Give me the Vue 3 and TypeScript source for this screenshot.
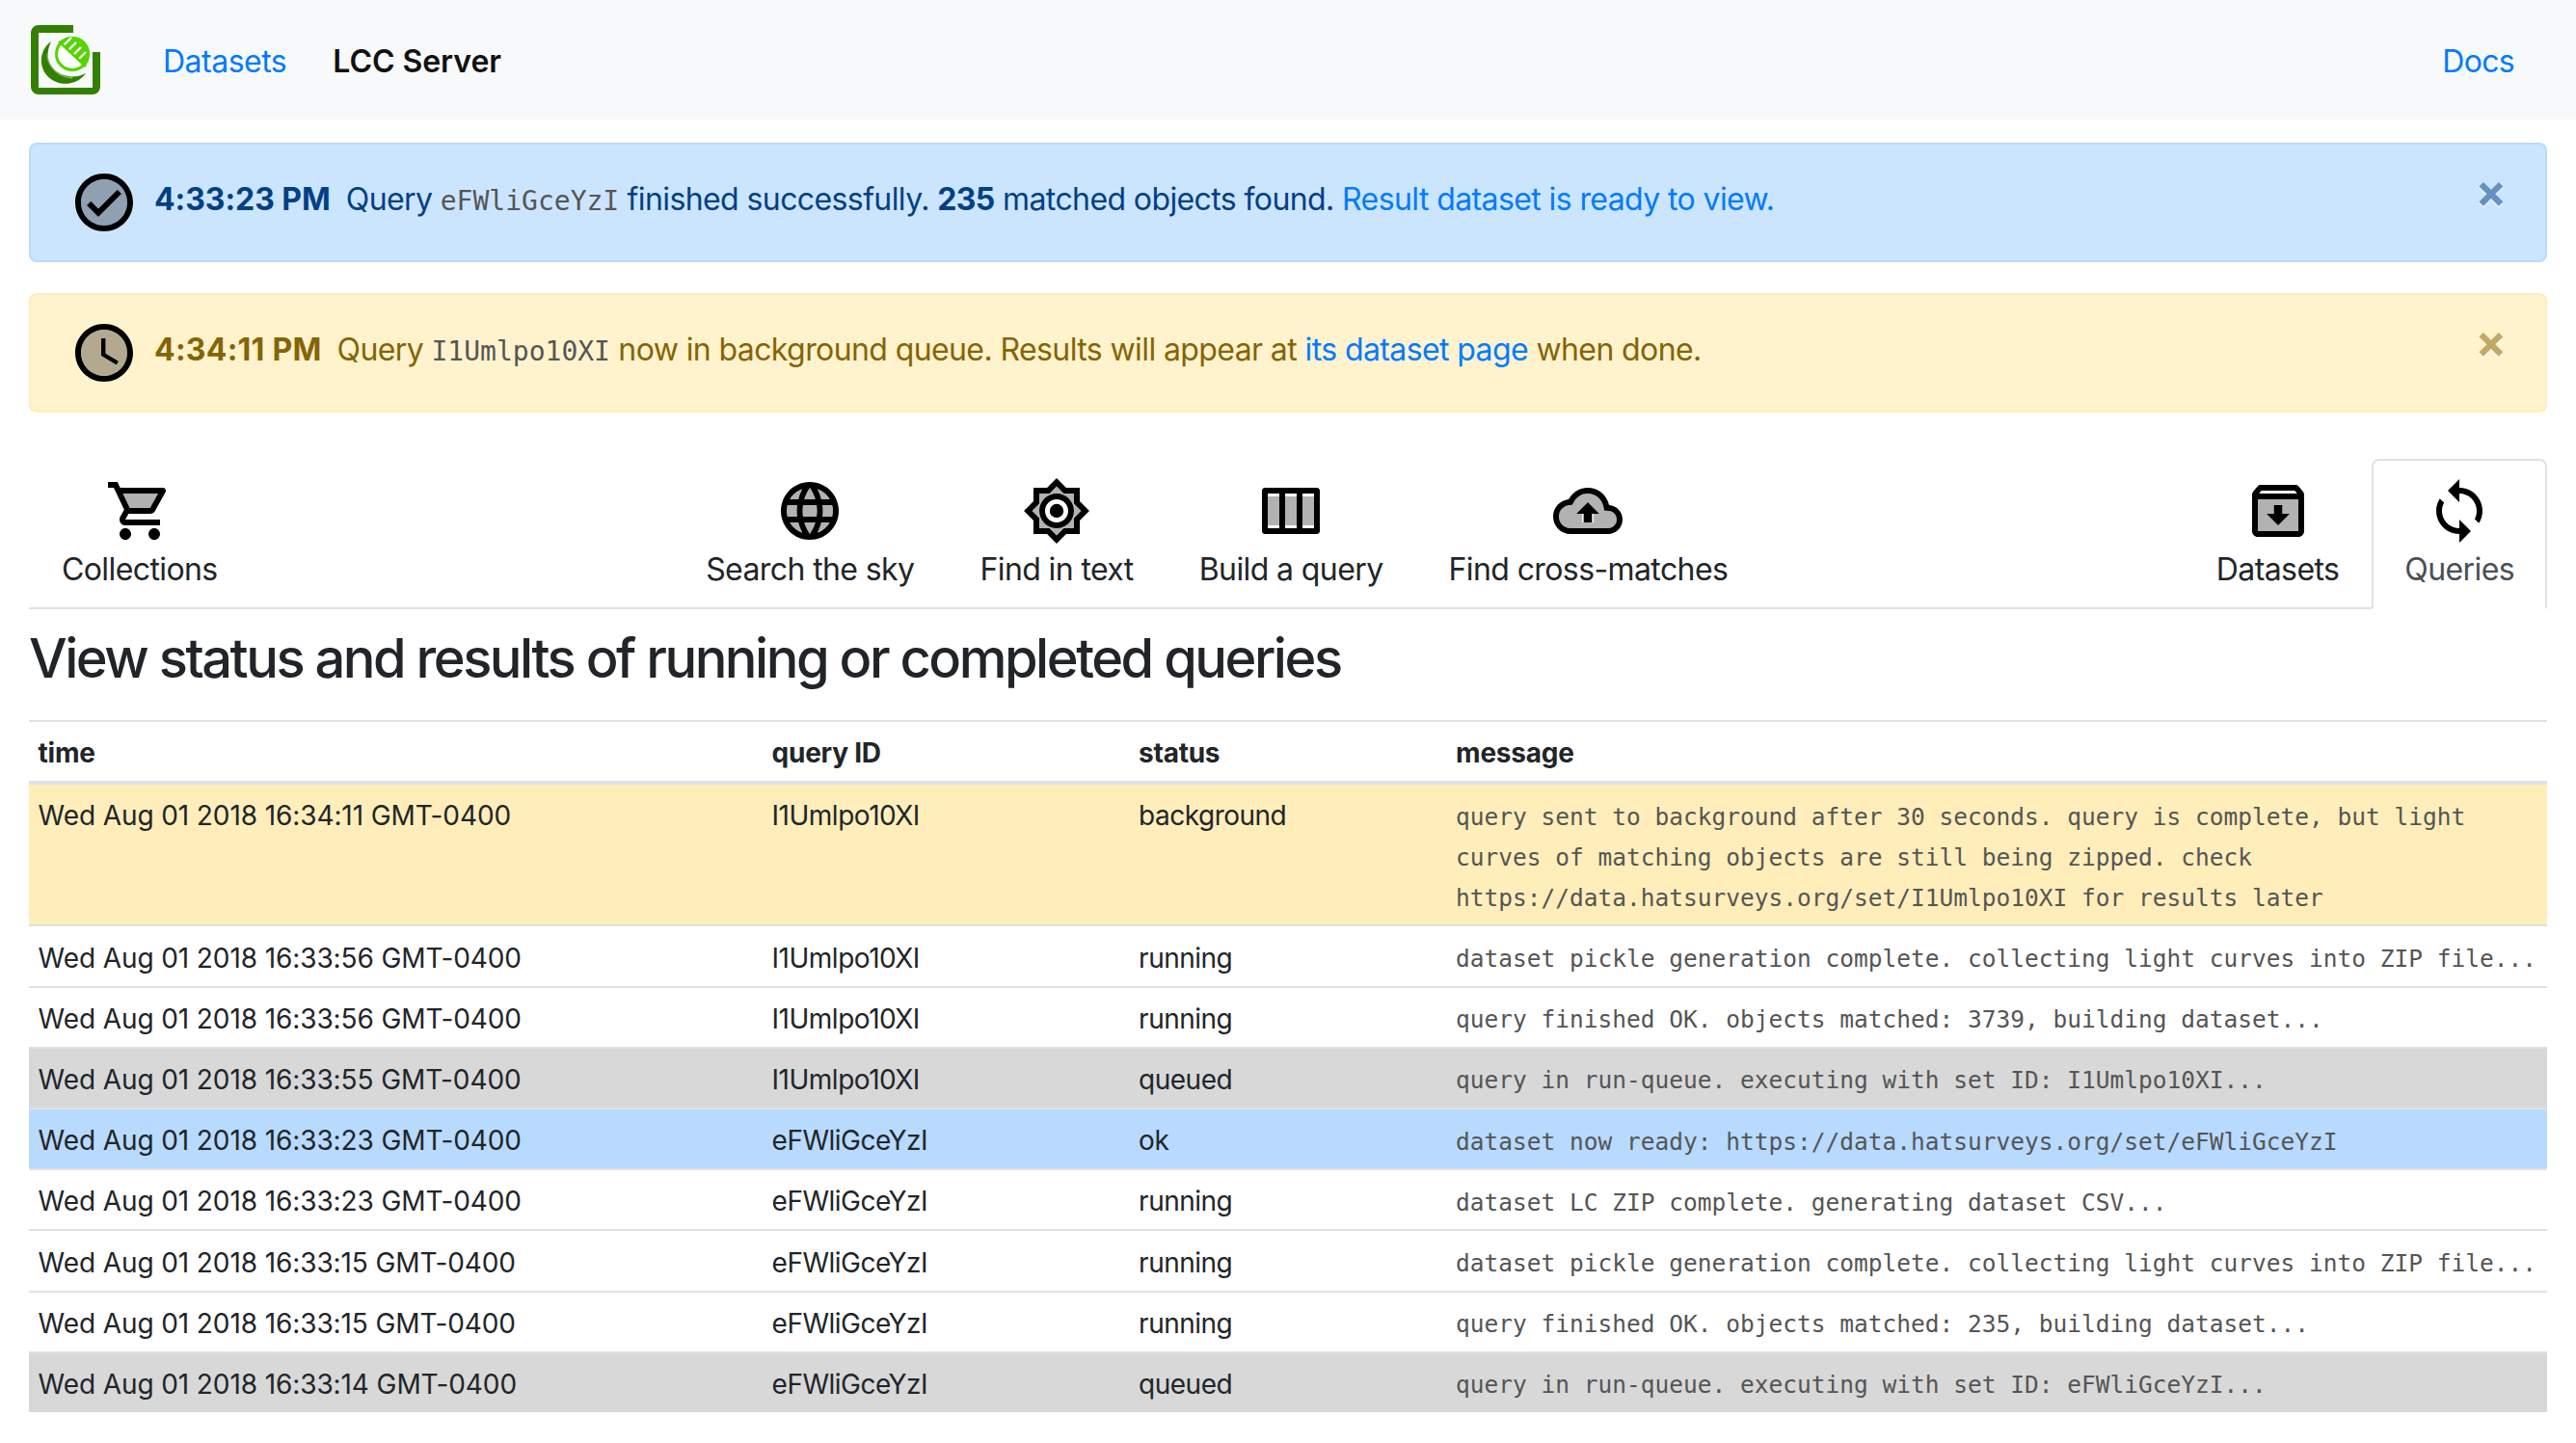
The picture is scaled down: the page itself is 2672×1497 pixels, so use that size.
<script setup lang="ts">
interface Row {
  time: string
  id: string
  status: string
  message: string
  kind: string
}

const rows: Row[] = [
  { time: 'Wed Aug 01 2018 16:34:11 GMT-0400', id: 'I1Umlpo10XI', status: 'background', kind: 'warn', message: 'query sent to background after 30 seconds. query is complete, but light curves of matching objects are still being zipped. check https://data.hatsurveys.org/set/I1Umlpo10XI for results later' },
  { time: 'Wed Aug 01 2018 16:33:56 GMT-0400', id: 'I1Umlpo10XI', status: 'running', kind: '', message: 'dataset pickle generation complete. collecting light curves into ZIP file...' },
  { time: 'Wed Aug 01 2018 16:33:56 GMT-0400', id: 'I1Umlpo10XI', status: 'running', kind: '', message: 'query finished OK. objects matched: 3739, building dataset...' },
  { time: 'Wed Aug 01 2018 16:33:55 GMT-0400', id: 'I1Umlpo10XI', status: 'queued', kind: 'gray', message: 'query in run-queue. executing with set ID: I1Umlpo10XI...' },
  { time: 'Wed Aug 01 2018 16:33:23 GMT-0400', id: 'eFWliGceYzI', status: 'ok', kind: 'info', message: 'dataset now ready: https://data.hatsurveys.org/set/eFWliGceYzI' },
  { time: 'Wed Aug 01 2018 16:33:23 GMT-0400', id: 'eFWliGceYzI', status: 'running', kind: '', message: 'dataset LC ZIP complete. generating dataset CSV...' },
  { time: 'Wed Aug 01 2018 16:33:15 GMT-0400', id: 'eFWliGceYzI', status: 'running', kind: '', message: 'dataset pickle generation complete. collecting light curves into ZIP file...' },
  { time: 'Wed Aug 01 2018 16:33:15 GMT-0400', id: 'eFWliGceYzI', status: 'running', kind: '', message: 'query finished OK. objects matched: 235, building dataset...' },
  { time: 'Wed Aug 01 2018 16:33:14 GMT-0400', id: 'eFWliGceYzI', status: 'queued', kind: 'gray', message: 'query in run-queue. executing with set ID: eFWliGceYzI...' },
]
</script>

<template>
  <div class="page">
    <nav class="navbar">
      <svg class="logo" viewBox="0 0 72 72">
        <defs>
          <clipPath id="hatch"><path d="M29.6 17.6 L56 42.4 A 17.5 17.5 0 0 0 29.6 17.6 Z" /></clipPath>
        </defs>
        <path fill="#338000" d="M44 0H8a8 8 0 0 0-8 8v56a8 8 0 0 0 8 8h56a8 8 0 0 0 8-8V28h-8v37H8V8h36z" />
        <path fill="#338000" d="M21 17C8 26 6 48 24 58c12 6 26 2 33-8-11 6-23 4-32-3-9-9-9-19-4-30z" />
        <path fill="none" stroke="#9cc77f" stroke-width="1" d="M17 30c0 12 10 24 26 25" />
        <circle cx="43" cy="30" r="16.5" fill="#fff" stroke="#55d400" stroke-width="3" />
        <g clip-path="url(#hatch)">
          <rect x="24" y="10" width="40" height="40" fill="#55d400" />
          <path stroke="#fff" stroke-width="2.4" d="M31 24 42 13M36 29 47 18M41 34 52 23M46 39 57 28" />
        </g>
        <path stroke="#55d400" stroke-width="2.6" d="M29 17 57 43" />
      </svg>
      <a class="brand-link">Datasets</a>
      <span class="brand">LCC Server</span>
      <a class="docs">Docs</a>
    </nav>

    <div class="alert alert-info">
      <svg class="alert-icon" viewBox="0 0 24 24">
        <path opacity=".3" d="M12 4c-4.41 0-8 3.59-8 8s3.59 8 8 8 8-3.59 8-8-3.59-8-8-8zm-2 13l-4-4 1.41-1.41L10 14.17l6.59-6.59L18 9l-8 8z" />
        <path d="M12 2C6.48 2 2 6.48 2 12s4.48 10 10 10 10-4.48 10-10S17.52 2 12 2zm0 18c-4.41 0-8-3.59-8-8s3.59-8 8-8 8 3.59 8 8-3.59 8-8 8zm4.59-12.42L10 14.17l-2.59-2.58L6 13l4 4 8-8z" />
      </svg>
      <p class="alert-text"><strong class="stamp">4:33:23 PM</strong>Query <code>eFWliGceYzI</code> finished successfully. <strong>235</strong> matched objects found. <a>Result dataset is ready to view.</a></p>
      <span class="close">×</span>
    </div>

    <div class="alert alert-warn">
      <svg class="alert-icon" viewBox="0 0 24 24">
        <path opacity=".3" d="M12 4c-4.42 0-8 3.58-8 8s3.58 8 8 8 8-3.58 8-8-3.58-8-8-8zm4.25 12.15L11 13V7h1.5v5.25l4.5 2.67-.75 1.23z" />
        <path d="M11.99 2C6.47 2 2 6.48 2 12s4.47 10 9.99 10C17.52 22 22 17.52 22 12S17.52 2 11.99 2zM12 20c-4.42 0-8-3.58-8-8s3.58-8 8-8 8 3.58 8 8-3.58 8-8 8zm.5-13H11v6l5.25 3.15.75-1.23-4.5-2.67z" />
      </svg>
      <p class="alert-text"><strong class="stamp stamp-wide">4:34:11 PM</strong>Query <code>I1Umlpo10XI</code> now in background queue. Results will appear at <a>its dataset page</a> when done.</p>
      <span class="close">×</span>
    </div>

    <div class="tabs">
      <div class="tab-group">
        <div class="tab">
          <svg class="tab-icon" viewBox="0 0 24 24">
            <path opacity=".3" d="M15.55 11l2.76-5H6.16l2.37 5z" />
            <path d="M15.55 13c.75 0 1.41-.41 1.75-1.03l3.58-6.49c.37-.66-.11-1.48-.87-1.48H5.21l-.94-2H1v2h2l3.6 7.59-1.35 2.44C4.52 15.37 5.48 17 7 17h12v-2H7l1.1-2h7.45zM6.16 6h12.15l-2.76 5H8.53L6.16 6zM7 18c-1.1 0-1.99.9-1.99 2S5.9 22 7 22s2-.9 2-2-.9-2-2-2zm10 0c-1.1 0-1.99.9-1.99 2s.89 2 1.99 2 2-.9 2-2-.9-2-2-2z" />
          </svg>
          <span class="tab-label">Collections</span>
        </div>
      </div>
      <div class="tab-group">
        <div class="tab">
          <svg class="tab-icon" viewBox="0 0 24 24">
            <path opacity=".3" d="M5.08 8h2.95c.32-1.25.78-2.45 1.38-3.56-1.84.63-3.37 1.9-4.33 3.56zm2.42 4c0-.68.06-1.34.14-2H4.26c-.16.64-.26 1.31-.26 2s.1 1.36.26 2h3.38c-.08-.66-.14-1.32-.14-2zm-2.42 4c.96 1.66 2.49 2.93 4.33 3.56-.6-1.11-1.06-2.31-1.38-3.56H5.08zM12 4.04c-.83 1.2-1.48 2.53-1.91 3.96h3.82c-.43-1.43-1.08-2.76-1.91-3.96zM18.92 8c-.96-1.65-2.49-2.93-4.33-3.56.6 1.11 1.06 2.31 1.38 3.56h2.95zM12 19.96c.83-1.2 1.48-2.53 1.91-3.96h-3.82c.43 1.43 1.08 2.76 1.91 3.96zm2.59-.4c1.84-.63 3.37-1.91 4.33-3.56h-2.95c-.32 1.25-.78 2.45-1.38 3.56zM19.74 10h-3.38c.08.66.14 1.32.14 2s-.06 1.34-.14 2h3.38c.16-.64.26-1.31.26-2s-.1-1.36-.26-2zM9.66 10c-.09.65-.16 1.32-.16 2s.07 1.34.16 2h4.68c.09-.66.16-1.32.16-2s-.07-1.35-.16-2H9.66z" />
            <path d="M11.99 2C6.47 2 2 6.48 2 12s4.47 10 9.99 10C17.52 22 22 17.52 22 12S17.52 2 11.99 2zm6.93 6h-2.95c-.32-1.25-.78-2.45-1.38-3.56 1.84.63 3.37 1.91 4.33 3.56zM12 4.04c.83 1.2 1.48 2.53 1.91 3.96h-3.82c.43-1.43 1.08-2.76 1.91-3.96zM4.26 14C4.1 13.36 4 12.69 4 12s.1-1.36.26-2h3.38c-.08.66-.14 1.32-.14 2s.06 1.34.14 2H4.26zm.82 2h2.95c.32 1.25.78 2.45 1.38 3.56-1.84-.63-3.37-1.9-4.33-3.56zm2.95-8H5.08c.96-1.66 2.49-2.93 4.33-3.56C8.81 5.55 8.35 6.75 8.03 8zM12 19.96c-.83-1.2-1.48-2.53-1.91-3.96h3.82c-.43 1.43-1.08 2.76-1.91 3.96zM14.34 14H9.66c-.09-.66-.16-1.32-.16-2s.07-1.35.16-2h4.68c.09.65.16 1.32.16 2s-.07 1.34-.16 2zm.25 5.56c.6-1.11 1.06-2.31 1.38-3.56h2.95c-.96 1.65-2.49 2.93-4.33 3.56zM16.36 14c.08-.66.14-1.32.14-2s-.06-1.34-.14-2h3.38c.16.64.26 1.31.26 2s-.1 1.36-.26 2h-3.38z" />
          </svg>
          <span class="tab-label">Search the sky</span>
        </div>
        <div class="tab">
          <svg class="tab-icon" viewBox="0 0 24 24">
            <path opacity=".3" d="M18 9.52V6h-3.52L12 3.52 9.52 6H6v3.52L3.52 12 6 14.48V18h3.52L12 20.48 14.48 18H18v-3.52L20.48 12 18 9.52zM12 18c-3.31 0-6-2.69-6-6s2.69-6 6-6 6 2.69 6 6-2.69 6-6 6z" />
            <path d="M20 8.69V4h-4.69L12 .69 8.69 4H4v4.69L.69 12 4 15.31V20h4.69L12 23.31 15.31 20H20v-4.69L23.31 12 20 8.69zm-2 5.79V18h-3.52L12 20.48 9.52 18H6v-3.52L3.52 12 6 9.52V6h3.52L12 3.52 14.48 6H18v3.52L20.48 12 18 14.48zM12 6c-3.31 0-6 2.69-6 6s2.69 6 6 6 6-2.69 6-6-2.69-6-6-6zm0 10c-2.21 0-4-1.79-4-4s1.79-4 4-4 4 1.79 4 4-1.79 4-4 4z" />
            <circle cx="12" cy="12" r="2.4" />
          </svg>
          <span class="tab-label">Find in text</span>
        </div>
        <div class="tab">
          <svg class="tab-icon" viewBox="0 0 24 24">
            <path opacity=".3" d="M4 7h4v10H4zM10 7h4v10h-4zM16 7h4v10h-4z" />
            <path d="M21 4H3c-.55 0-1 .45-1 1v14c0 .55.45 1 1 1h18c.55 0 1-.45 1-1V5c0-.55-.45-1-1-1zM8 18H4V6h4v12zm6 0h-4V6h4v12zm6 0h-4V6h4v12z" />
          </svg>
          <span class="tab-label">Build a query</span>
        </div>
        <div class="tab">
          <svg class="tab-icon" viewBox="0 0 24 24">
            <path opacity=".3" d="M19.21 12.04l-1.53-.11-.3-1.5C16.88 7.86 14.62 6 12 6 9.94 6 8.08 7.14 7.12 8.96l-.5.95-1.07.11C3.53 10.24 2 11.95 2 14c0 2.21 1.79 4 4 4h13c1.65 0 3-1.35 3-3 0-1.55-1.22-2.86-2.79-2.96zM14 13v3h-4v-3H8l4-4 4 4h-2z" />
            <path d="M19.35 10.04C18.67 6.59 15.64 4 12 4 9.11 4 6.6 5.64 5.35 8.04 2.34 8.36 0 10.91 0 14c0 3.31 2.69 6 6 6h13c2.76 0 5-2.24 5-5 0-2.64-2.05-4.78-4.65-4.96zM19 18H6c-2.21 0-4-1.79-4-4 0-2.05 1.53-3.76 3.56-3.97l1.07-.11.5-.95C8.08 7.14 9.94 6 12 6c2.62 0 4.88 1.86 5.39 4.43l.3 1.5 1.53.11c1.56.1 2.78 1.41 2.78 2.96 0 1.65-1.35 3-3 3z" />
            <path d="M8 13h2.55v3h2.9v-3H16l-4-4z" />
          </svg>
          <span class="tab-label">Find cross-matches</span>
        </div>
      </div>
      <div class="tab-group">
        <div class="tab">
          <svg class="tab-icon" viewBox="0 0 24 24">
            <path opacity=".3" d="M5 8v11h14V8H5zm7 9l-4-4h2.55v-3h2.9v3H16l-4 4z" />
            <path d="M20.54 5.23l-1.39-1.68C18.88 3.21 18.47 3 18 3H6c-.47 0-.88.21-1.16.55L3.46 5.23C3.17 5.57 3 6.02 3 6.5V19c0 1.1.9 2 2 2h14c1.1 0 2-.9 2-2V6.5c0-.48-.17-.93-.46-1.27zM6.24 5h11.52l.83 1H5.42l.82-1zM5 19V8h14v11H5zm8.45-9h-2.9v3H8l4 4 4-4h-2.55z" />
          </svg>
          <span class="tab-label">Datasets</span>
        </div>
        <div class="tab tab-active">
          <svg class="tab-icon" viewBox="0 0 24 24">
            <path d="M12 4V1L8 5l4 4V6c3.31 0 6 2.69 6 6 0 1.01-.25 1.97-.7 2.8l1.46 1.46C19.54 15.03 20 13.57 20 12c0-4.42-3.58-8-8-8zm0 14c-3.31 0-6-2.69-6-6 0-1.01.25-1.97.7-2.8L5.24 7.74C4.46 8.97 4 10.43 4 12c0 4.42 3.58 8 8 8v3l4-4-4-4v3z" />
          </svg>
          <span class="tab-label">Queries</span>
        </div>
      </div>
    </div>

    <h1 class="title">View status and results of running or completed queries</h1>

    <table class="table">
      <colgroup>
        <col class="col-time" />
        <col class="col-id" />
        <col class="col-status" />
        <col />
      </colgroup>
      <thead>
        <tr>
          <th>time</th>
          <th>query ID</th>
          <th>status</th>
          <th>message</th>
        </tr>
      </thead>
      <tbody>
        <tr v-for="(row, i) in rows" :key="i" :class="row.kind">
          <td class="cell-time">{{ row.time }}</td>
          <td>{{ row.id }}</td>
          <td>{{ row.status }}</td>
          <td><code class="msg">{{ row.message }}</code></td>
        </tr>
      </tbody>
    </table>
  </div>
</template>

<style scoped>
.page {
  font-family: Inter, "Liberation Sans", sans-serif;
  font-size: 32px;
  line-height: 48px;
  color: #212529;
  background: #fff;
  min-height: 1497px;
  letter-spacing: -0.5px;
}
.navbar {
  display: flex;
  align-items: center;
  height: 124px;
  padding: 0 32px;
  background: #f8f9fa;
}
.logo {
  width: 72px;
  height: 72px;
  flex: none;
}
.brand-link {
  margin-left: 65px;
  padding-top: 3px;
  color: #007bff;
}
.brand {
  margin-left: 48px;
  padding-top: 3px;
  font-weight: 600;
  letter-spacing: -0.05px;
  color: #111;
}
.docs {
  margin-left: auto;
  margin-right: 32px;
  padding-top: 3px;
  letter-spacing: -0.7px;
  color: #007bff;
}
.alert {
  position: relative;
  display: flex;
  align-items: center;
  margin: 24px 30px 32px;
  padding: 24px 40px;
  border: 2px solid transparent;
  border-radius: 8px;
}
.alert + .alert {
  margin-top: 32px;
}
.alert-info {
  background: #cce5ff;
  border-color: #b8daff;
  color: #004085;
}
.alert-warn {
  background: #fff3cd;
  border-color: #ffeeba;
  color: #856404;
}
.alert-icon {
  width: 72px;
  height: 72px;
  flex: none;
  margin-right: 16px;
}
.alert-text {
  margin: 0 0 4px;
  letter-spacing: -0.6px;
}
.alert-text a {
  color: #007bff;
}
.stamp {
  margin-right: 16px;
  letter-spacing: -0.05px;
}
.stamp-wide {
  letter-spacing: 0.25px;
}
strong {
  font-weight: 700;
}
code {
  font-family: "DejaVu Sans Mono", "Liberation Mono", monospace;
  letter-spacing: 0;
  color: #555;
}
.alert-text code {
  font-size: 28px;
}
.close {
  position: absolute;
  top: 24px;
  right: 40px;
  font-size: 48px;
  line-height: 48px;
  font-weight: 700;
  letter-spacing: 0;
  color: inherit;
  opacity: 0.5;
  text-shadow: 0 2px 0 #fff;
}
.tabs {
  display: flex;
  justify-content: space-between;
  margin: 48px 30px 0;
  border-bottom: 2px solid #dee2e6;
}
.tab-group {
  display: flex;
}
.tab {
  display: flex;
  flex-direction: column;
  align-items: center;
  padding: 16px 32px;
  margin-bottom: -2px;
  border: 2px solid transparent;
  border-radius: 8px 8px 0 0;
}
.tab-icon {
  display: block;
  width: 72px;
  height: 72px;
}
.tab-label {
  letter-spacing: -0.6px;
  position: relative;
  top: 1px;
}
.tab-active {
  background: #fff;
  border-color: #dee2e6 #dee2e6 #fff;
  color: #495057;
}
.title {
  margin: 18px 30px 30px;
  font-size: 56px;
  line-height: 67px;
  font-weight: 500;
  letter-spacing: -2.48px;
}
.table {
  width: 2612px;
  margin: 0 30px;
  border-collapse: collapse;
  table-layout: fixed;
  font-size: 28px;
  line-height: 42px;
}
.col-time {
  width: 761px;
}
.col-id {
  width: 380.5px;
}
.col-status {
  width: 329px;
}
th {
  padding: 10.6px 9.6px 8.6px;
  text-align: left;
  font-weight: 700;
  letter-spacing: -0.25px;
  border-top: 2px solid #dee2e6;
  border-bottom: 4px solid #dee2e6;
}
td {
  padding: 11.2px 9.6px 8px;
  vertical-align: top;
  border-top: 2px solid #dee2e6;
}
.cell-time {
  letter-spacing: -0.1px;
}
thead + tbody tr:first-child td {
  border-top: 0;
}
.msg {
  display: block;
  margin: 1.5px 0 -1.5px;
  font-size: 24.5px;
  line-height: 42px;
  color: #555;
}
.warn td {
  background: #ffeeba;
}
.info td {
  background: #b8daff;
}
.gray td {
  background: #d8d8d8;
}
</style>

<style>
html,
body {
  margin: 0;
  background: #fff;
}
</style>
